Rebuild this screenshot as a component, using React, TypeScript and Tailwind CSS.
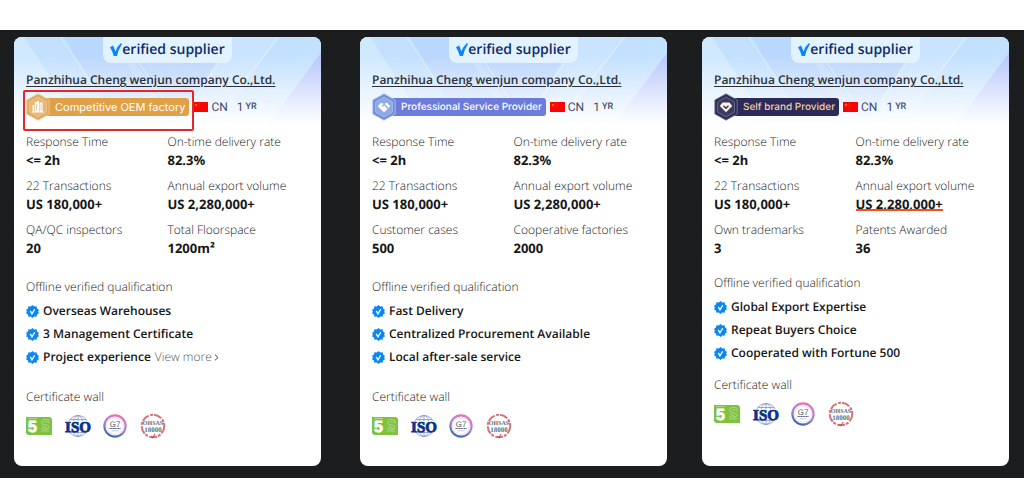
type Supplier = {
  id: string
  badge: string
  kind: "factory" | "service" | "brand"
  highlighted?: boolean
  stats: { label: string; value: string; marked?: boolean }[]
  qualifications: string[]
  viewMore?: boolean
}

const suppliers: Supplier[] = [
  {
    id: "factory",
    badge: "Competitive OEM factory",
    kind: "factory",
    highlighted: true,
    stats: [
      { label: "Response Time", value: "<= 2h" },
      { label: "On-time delivery rate", value: "82.3%" },
      { label: "22 Transactions", value: "US 180,000+" },
      { label: "Annual export volume", value: "US 2,280,000+" },
      { label: "QA/QC inspectors", value: "20" },
      { label: "Total Floorspace", value: "1200m²" },
    ],
    qualifications: ["Overseas Warehouses", "3 Management Certificate", "Project experience"],
    viewMore: true,
  },
  {
    id: "service",
    badge: "Professional Service Provider",
    kind: "service",
    stats: [
      { label: "Response Time", value: "<= 2h" },
      { label: "On-time delivery rate", value: "82.3%" },
      { label: "22 Transactions", value: "US 180,000+" },
      { label: "Annual export volume", value: "US 2,280,000+" },
      { label: "Customer cases", value: "500" },
      { label: "Cooperative factories", value: "2000" },
    ],
    qualifications: ["Fast Delivery", "Centralized Procurement Available", "Local after-sale service"],
  },
  {
    id: "brand",
    badge: "Self brand Provider",
    kind: "brand",
    stats: [
      { label: "Response Time", value: "<= 2h" },
      { label: "On-time delivery rate", value: "82.3%" },
      { label: "22 Transactions", value: "US 180,000+" },
      { label: "Annual export volume", value: "US 2,280,000+", marked: true },
      { label: "Own trademarks", value: "3" },
      { label: "Patents Awarded", value: "36" },
    ],
    qualifications: ["Global Export Expertise", "Repeat Buyers Choice", "Cooperated with Fortune 500"],
  },
]

const badgeStyles = {
  factory: { pill: "bg-[#dfa047] text-[11px] text-white", outer: "#e0a95c", inner: "#e6b877", rim: "#f0cd98" },
  service: { pill: "bg-[#6c7bdc] text-[10px] font-medium text-white", outer: "#6f8ed6", inner: "#8fa9e6", rim: "#b5c8f4" },
  brand: { pill: "bg-[#2b2a58] text-[10px] font-medium text-[#f3cfa8]", outer: "#2c2c52", inner: "#3a3b63", rim: "#7d7f9f" },
}

// Light rays behind the card header, fading to white
function HeaderRays({ id }: { id: string }) {
  return (
    <svg
      className="absolute inset-x-0 top-0 h-[92px] w-full"
      viewBox="0 0 307 92"
      preserveAspectRatio="none"
      aria-hidden="true"
    >
      <defs>
        <linearGradient id={`${id}-sky`} x1="0" y1="0" x2="1" y2="0">
          <stop offset="0" stopColor="#c3e1fe" />
          <stop offset="0.5" stopColor="#c2dcfe" />
          <stop offset="1" stopColor="#c3e2fe" />
        </linearGradient>
        <linearGradient id={`${id}-fade`} x1="0" y1="0" x2="0" y2="1">
          <stop offset="0.2" stopColor="#fff" stopOpacity="0" />
          <stop offset="0.95" stopColor="#fff" />
        </linearGradient>
      </defs>
      <rect width="307" height="92" fill={`url(#${id}-sky)`} />
      <path d="M0 0H10L70 92H0Z" fill="#d0e9ff" />
      <path d="M50 0H98L150 92H105Z" fill="#b5d2fc" opacity="0.6" />
      <path d="M120 24L165 92H178L206 40V24Z" fill="#b3d0fd" opacity="0.6" />
      <path d="M218 0H265L200 92H160Z" fill="#cde6ff" opacity="0.7" />
      <path d="M307 16V92H250Z" fill="#b5bcfb" opacity="0.7" />
      <path d="M265 0L215 62" stroke="#e4f1ff" />
      <path d="M47 0L80 50M125 26L155 70M205 26L180 62" stroke="#e4f1ff" opacity="0.8" />
      <rect width="307" height="92" fill={`url(#${id}-fade)`} />
    </svg>
  )
}

function BadgeIcon({ kind }: { kind: Supplier["kind"] }) {
  const style = badgeStyles[kind]
  return (
    <svg className="relative z-10 h-7 w-6 shrink-0" viewBox="0 0 24 28" aria-hidden="true">
      <path d="M12 .8L23.2 7v14L12 27.2.8 21V7Z" fill={style.outer} stroke={style.rim} strokeWidth="0.8" />
      <path d="M12 4L20.4 8.8v10.4L12 24l-8.4-4.8V8.8Z" fill={style.inner} stroke={style.rim} strokeWidth="0.7" />
      {kind === "factory" && (
        <g fill="#fff">
          <path d="M8.8 9.5L13 7.6V19H8.8Z" />
          <path d="M13.6 9.5h3V19h-3ZM6.6 12h1.6v7H6.6ZM5.8 18.4h12v1H5.8Z" />
          <path d="M10.5 11v6.5M15.1 11.2v6.3" stroke={style.inner} strokeWidth="0.7" />
        </g>
      )}
      {kind === "service" && (
        <g>
          <path d="M12 19.5L5.8 13.3 9 9.8l3 1.2 3-1.2 3.2 3.5Z" fill="#fff" />
          <path d="M10.2 13.4l2-2 3.8 3.8" stroke={style.inner} strokeWidth="1.3" fill="none" />
        </g>
      )}
      {kind === "brand" && (
        <g>
          <path d="M8.6 9.5h6.8l2.8 3.6L12 19.3l-6.2-6.2Z" fill="#fff3df" />
          <path d="M9.5 12.8l2.5 2.5 2.5-2.5" stroke="#2c2c52" strokeWidth="1.3" fill="none" />
        </g>
      )}
    </svg>
  )
}

function ChinaFlag() {
  return (
    <svg className="h-[10px] w-[15px] shrink-0" viewBox="0 0 15 10" aria-hidden="true">
      <rect width="15" height="10" fill="#f70505" />
      <path d="M3 1.4l.4 1.1h1.2l-1 .7.4 1.2-1-.8-1 .8.4-1.2-1-.7h1.2Z" fill="#ff9c1a" />
      <path d="M5.8 1h.6v.6h-.6ZM6.6 2.2h.6v.6h-.6ZM5.8 4h.6v.6h-.6Z" fill="#ff9c1a" />
    </svg>
  )
}

function VerifiedIcon() {
  return (
    <svg className="size-[13px] shrink-0" viewBox="0 0 14 14" aria-hidden="true">
      <path
        d="M7 0l1.9 1.6 2.5-.2.5 2.4L14 5.3 13 7l1 1.8-2.1 1.5-.5 2.3-2.5-.2L7 14l-1.9-1.6-2.5.2-.5-2.3L0 8.8 1 7 0 5.3l2.1-1.5.5-2.4 2.5.2Z"
        fill="#0b87f5"
      />
      <path d="M4.6 6.4l1.8 3.2 3-5" stroke="#fff" strokeWidth="1.4" fill="none" />
    </svg>
  )
}

function CertificateWall() {
  return (
    <div className="mt-2 flex h-6 items-center">
      <svg className="h-[18px] w-[26px]" viewBox="0 0 26 18" role="img" aria-label="5S">
        <path d="M0 0H23a3 3 0 0 1 3 3V18H3a3 3 0 0 1-3-3Z" fill="#7fc241" />
        <path d="M2 1.5h9" stroke="#b5dd8c" strokeWidth="0.8" />
        <text x="2" y="14.5" fontSize="16" fontWeight="700" fill="#fff" stroke="#fff" strokeWidth="0.8" className="font-['Liberation_Sans',sans-serif]">5</text>
        <path d="M23.5 3.5c-4-2-8-1-8 1.8 0 3.4 7.5 1.6 7.5 5 0 2.4-5 2.4-8 .9M24 6c-3-2-6-1.5-6 0M15 14h8M16 9c3 2 5 1 5 3" stroke="#b9df90" strokeWidth="0.8" fill="none" />
      </svg>
      <svg className="ml-3 h-6 w-7" viewBox="0 0 28 24" role="img" aria-label="ISO">
        <g stroke="#7d93c8" strokeWidth="0.8" fill="none">
          <circle cx="14" cy="12" r="10.5" />
          <ellipse cx="14" cy="12" rx="5.5" ry="10.5" />
          <path d="M14 1.5v21M6 5.5h16M6 18.5h16" />
        </g>
        <path d="M0 7h28v11H0Z" fill="#fff" />
        <text x="14" y="17.5" textAnchor="middle" fontSize="15" fontWeight="700" fill="#0b3183" stroke="#0b3183" strokeWidth="0.8" className="font-['Liberation_Serif',serif]">ISO</text>
      </svg>
      <svg className="ml-[11px] size-6" viewBox="0 0 24 24" role="img" aria-label="G7 Master">
        <defs>
          <linearGradient id="g7-ring" x1="0.7" y1="0" x2="0.3" y2="1">
            <stop offset="0" stopColor="#ee6fb5" />
            <stop offset="0.5" stopColor="#a58bc9" />
            <stop offset="1" stopColor="#4168b5" />
          </linearGradient>
        </defs>
        <circle cx="12" cy="12" r="10.6" fill="#fff" stroke="url(#g7-ring)" strokeWidth="2.2" />
        <circle cx="12" cy="12" r="8.3" fill="none" stroke="#c8c4dc" strokeWidth="0.5" />
        <text x="12" y="12.5" textAnchor="middle" fontSize="8" fill="#555" className="font-['Liberation_Sans',sans-serif]">G7</text>
        <path d="M6.5 14.5h11" stroke="#555a7c" strokeWidth="1.2" strokeDasharray="1.3 0.4" />
        <path d="M8.5 16.8h7" stroke="#b5b6c8" strokeWidth="0.7" />
      </svg>
      <svg className="ml-[13px] size-[26px]" viewBox="0 0 26 26" role="img" aria-label="OHSAS 18000">
        <circle cx="13" cy="13" r="11.3" fill="none" stroke="#d27378" strokeWidth="2" strokeDasharray="8 1.5 3 1" />
        <text x="13" y="12" textAnchor="middle" fontSize="6" fontWeight="700" fill="#55707c" className="font-['Liberation_Serif',serif]">OHSAS</text>
        <text x="13" y="19" textAnchor="middle" fontSize="7" fontWeight="700" fill="#55707c" className="font-['Liberation_Serif',serif]">18000</text>
        <path d="M11.5 23l1.2 2 2.3-4" stroke="#d33d40" strokeWidth="1" fill="none" />
      </svg>
    </div>
  )
}

function SupplierCard({ supplier }: { supplier: Supplier }) {
  const { id, badge, kind, highlighted, stats, qualifications, viewMore } = supplier
  const compact = kind === "brand"

  return (
    <article className="relative min-w-0 flex-1 overflow-hidden rounded-lg bg-white px-3 pb-7 first:mr-1">
      <HeaderRays id={id} />
      <div className="relative">
        <div className="mx-auto flex h-[26px] w-[129px] items-center justify-center rounded-b-lg bg-[#e2f2ff] text-[#0d2c6c]">
          <svg className="h-[14px] w-3" viewBox="0 0 12 14" aria-hidden="true">
            <path d="M0 4.2L3 2.5Q4.500 5 5.300 8.500Q7 3.500 11 0L12 1Q8.500 6 7 13H3.800Q2.500 8 0 4.200Z" fill="#0a86f5" />
          </svg>
          <span className="text-sm font-[650]">erified supplier</span>
        </div>

        <h2 className="mt-[7px] text-xs leading-5 font-[650] whitespace-nowrap text-[#2b2f38]">
          <a href="#" className="underline underline-offset-2">Panzhihua Cheng wenjun company Co.,Ltd.</a>
        </h2>

        <div className="relative mt-[3px] flex h-7 items-center font-[Inter,sans-serif]">
          <BadgeIcon kind={kind} />
          <span
            className={`-ml-1 flex h-[18px] items-center rounded-r-[3px] pr-1 pl-[9px] whitespace-nowrap ${badgeStyles[kind].pill}`}
          >
            {badge}
          </span>
          <span className="ml-1 flex items-center font-[Roboto,sans-serif] text-xs text-[#434b66]">
            <ChinaFlag />
            <span className="ml-[3px]">CN</span>
            <span className="ml-[9px]">1</span>
            <span className="ml-[2px] text-[9px] font-medium">YR</span>
          </span>
          {highlighted && (
            <div className="absolute -top-[3px] -left-[3px] h-[41px] w-[171px] rounded-[2px] border-2 border-[#e8262a]" />
          )}
        </div>

        <dl className="mt-[12px] grid grid-cols-2 gap-y-2">
          {stats.map((stat) => (
            <div key={stat.label}>
              <dt className="text-xs leading-[18px] font-light text-[#222]">{stat.label}</dt>
              <dd className="font-['Noto_Sans',sans-serif] text-[13px] leading-[18px] font-bold">
                <span className="relative">
                  {stat.value}
                  {stat.marked && <span className="absolute inset-x-0 bottom-[2px] h-[2px] bg-[#f0521d]" />}
                </span>
              </dd>
            </div>
          ))}
        </dl>

        <h3 className={`text-xs leading-[18px] font-light text-[#222] ${compact ? "mt-[17px]" : "mt-[21px]"}`}>
          Offline verified qualification
        </h3>
        <ul className="mt-[6px] flex flex-col gap-[5px]">
          {qualifications.map((item, index) => (
            <li key={item} className="flex items-center text-xs leading-[18px] font-[650] whitespace-nowrap">
              <VerifiedIcon />
              <span className="ml-1">{item}</span>
              {viewMore && index === qualifications.length - 1 && (
                <a href="#" className="ml-1 flex items-center font-light text-[#555]">
                  View more
                  <svg className="ml-[2px] h-[7px] w-[5px]" viewBox="0 0 5 7" aria-hidden="true">
                    <path d="M1 .7l3 2.8-3 2.8" stroke="#444" fill="none" />
                  </svg>
                </a>
              )}
            </li>
          ))}
        </ul>

        <h3 className={`text-xs leading-[18px] font-light text-[#222] ${compact ? "mt-[14px]" : "mt-[22px]"}`}>
          Certificate wall
        </h3>
        <CertificateWall />
      </div>
    </article>
  )
}

export default function App() {
  return (
    <div className="min-h-screen bg-white pt-[30px] font-['Open_Sans','Noto_Sans',sans-serif] text-[#161616] [text-rendering:geometricPrecision]">
      <main className="flex gap-[35px] bg-[#1c1d1f] pt-[7px] pr-[15px] pb-3 pl-[14px]">
        {suppliers.map((supplier) => (
          <SupplierCard key={supplier.id} supplier={supplier} />
        ))}
      </main>
    </div>
  )
}
